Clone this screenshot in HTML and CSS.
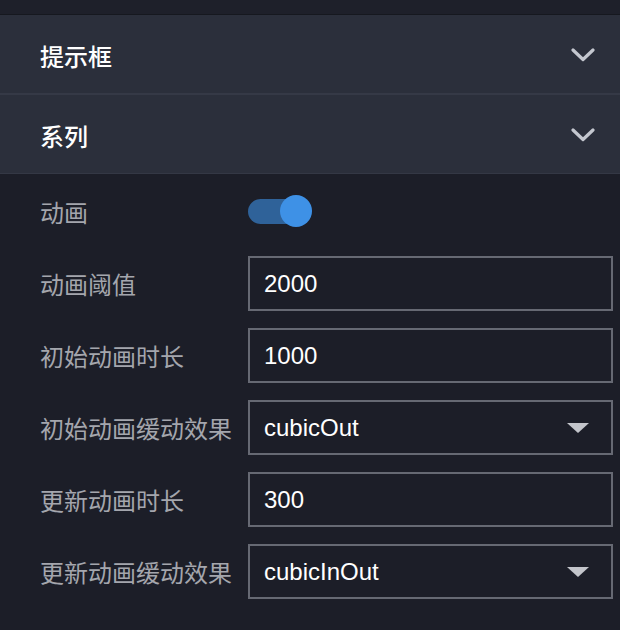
FILE: index.html
```html
<!DOCTYPE html>
<html lang="zh">
<head>
<meta charset="utf-8">
<link rel="stylesheet" href="styles.css">
</head>
<body>
<div class="panel">
  <div class="topbar"></div>
  <div class="section-head first">
    <span class="title">提示框</span>
    <svg class="chev" width="24" height="14" viewBox="0 0 24 14"><path d="M2 2 L12 11.5 L22 2" fill="none" stroke="#c4c7cf" stroke-width="3.2" stroke-linecap="round" stroke-linejoin="round"/></svg>
  </div>
  <div class="section-head second">
    <span class="title">系列</span>
    <svg class="chev" width="24" height="14" viewBox="0 0 24 14"><path d="M2 2 L12 11.5 L22 2" fill="none" stroke="#c4c7cf" stroke-width="3.2" stroke-linecap="round" stroke-linejoin="round"/></svg>
  </div>
  <div class="body">
    <div class="row">
      <span class="label">动画</span>
      <div class="control">
        <div class="toggle"><span class="knob"></span></div>
      </div>
    </div>
    <div class="row">
      <span class="label">动画阈值</span>
      <div class="control"><div class="field">2000</div></div>
    </div>
    <div class="row">
      <span class="label">初始动画时长</span>
      <div class="control"><div class="field">1000</div></div>
    </div>
    <div class="row">
      <span class="label">初始动画缓动效果</span>
      <div class="control"><div class="field select"><span>cubicOut</span><span class="caret"></span></div></div>
    </div>
    <div class="row">
      <span class="label">更新动画时长</span>
      <div class="control"><div class="field">300</div></div>
    </div>
    <div class="row">
      <span class="label">更新动画缓动效果</span>
      <div class="control"><div class="field select"><span>cubicInOut</span><span class="caret"></span></div></div>
    </div>
  </div>
</div>
</body>
</html>
```
FILE: styles.css
```css
html, body {
  margin: 0;
  padding: 0;
  background: #1c1e28;
}
.panel {
  width: 620px;
  height: 630px;
  overflow: hidden;
  background: #1c1e28;
  font-family: "Liberation Sans", "Noto Sans CJK SC", sans-serif;
}
.topbar {
  height: 14px;
  background: #1e202a;
  border-bottom: 1px solid #16181f;
}
.section-head {
  background: #2b2f3b;
  display: flex;
  align-items: center;
  justify-content: space-between;
  padding: 2px 25px 0 40px;
  box-sizing: border-box;
}
.section-head.first {
  height: 80px;
  border-bottom: 2px solid #353946;
}
.section-head.second {
  height: 79px;
  border-bottom: 1px solid #343845;
}
.title {
  color: #ffffff;
  font-size: 24px;
  font-weight: 500;
}
.chev {
  display: block;
}
.body {
  padding: 10px 7px 0 40px;
  display: flex;
  flex-direction: column;
  gap: 17px;
}
.row {
  display: flex;
  align-items: center;
  height: 55px;
}
.label {
  width: 208px;
  flex: none;
  color: #a4a6ad;
  font-size: 24px;
}
.control {
  flex: 1;
  display: flex;
  align-items: center;
}
.field {
  flex: 1;
  height: 55px;
  box-sizing: border-box;
  border: 2px solid #666973;
  display: flex;
  align-items: center;
  justify-content: space-between;
  padding: 1px 22px 0 14px;
  color: #ffffff;
  font-size: 24px;
}
.caret {
  width: 0;
  height: 0;
  border-left: 11px solid transparent;
  border-right: 11px solid transparent;
  border-top: 10px solid #c3c5cb;
}
.toggle {
  position: relative;
  width: 50px;
  height: 25px;
  border-radius: 13px;
  background: #2f6299;
}
.knob {
  position: absolute;
  left: 32px;
  top: -4px;
  width: 32px;
  height: 32px;
  border-radius: 50%;
  background: #3e91e6;
}
```
